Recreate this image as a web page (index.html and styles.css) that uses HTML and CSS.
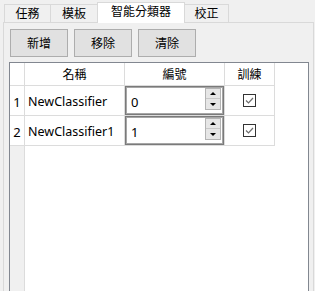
FILE: index.html
```html
<!DOCTYPE html>
<html lang="zh-Hant">
<head>
    <meta charset="UTF-8">
    <title>智能分類器</title>
    <link rel="stylesheet" href="styles.css">
</head>
<body>
    <div class="tabs">
        <div class="tab tab-task">任務</div>
        <div class="tab tab-template">模板</div>
        <div class="tab tab-classifier active">智能分類器</div>
        <div class="tab tab-calibrate">校正</div>
    </div>

    <div class="panel">
        <div class="toolbar">
            <button class="btn">新增</button>
            <button class="btn">移除</button>
            <button class="btn">清除</button>
        </div>

        <div class="grid">
            <div class="cell rowhead"></div>
            <div class="cell head">名稱</div>
            <div class="cell head">編號</div>
            <div class="cell head">訓練</div>
            <div class="cell filler"></div>

            <div class="cell rowhead num">1</div>
            <div class="cell name">NewClassifier</div>
            <div class="cell">
                <div class="spinbox">
                    <span class="value">0</span>
                    <div class="spin">
                        <span class="up"></span>
                        <span class="down"></span>
                    </div>
                </div>
            </div>
            <div class="cell check-cell">
                <span class="checkbox">
                    <svg width="11" height="11" viewBox="0 0 11 11"><polyline points="2,5.5 4.5,8 9,3" fill="none" stroke="#6d6d6d" stroke-width="1.2"/></svg>
                </span>
            </div>
            <div class="cell filler"></div>

            <div class="cell rowhead num">2</div>
            <div class="cell name">NewClassifier1</div>
            <div class="cell">
                <div class="spinbox">
                    <span class="value">1</span>
                    <div class="spin">
                        <span class="up"></span>
                        <span class="down"></span>
                    </div>
                </div>
            </div>
            <div class="cell check-cell">
                <span class="checkbox">
                    <svg width="11" height="11" viewBox="0 0 11 11"><polyline points="2,5.5 4.5,8 9,3" fill="none" stroke="#6d6d6d" stroke-width="1.2"/></svg>
                </span>
            </div>
            <div class="cell filler"></div>

            <div class="cell rowhead empty"></div>
            <div class="cell filler"></div>
            <div class="cell filler"></div>
            <div class="cell filler"></div>
            <div class="cell filler"></div>
        </div>
    </div>
</body>
</html>
```

FILE: styles.css
```css
* {
    margin: 0;
    padding: 0;
    box-sizing: border-box;
}

body {
    width: 315px;
    height: 291px;
    overflow: hidden;
    background: #f0f0f0;
    color: #000;
    font-family: "Noto Sans", "Noto Sans CJK TC", sans-serif;
    font-size: 12px;
}

/* tab strip */
.tabs {
    display: flex;
    align-items: flex-end;
    height: 22px;
    padding-left: 4px;
}

.tab {
    height: 18px;
    margin-left: -1px;
    border: 1px solid #d9d9d9;
    border-bottom: none;
    background: #f0f0f0;
    display: flex;
    align-items: center;
    justify-content: center;
    line-height: 1;
}

.tab:first-child {
    margin-left: 0;
}

.tab-task { width: 47px; }
.tab-template { width: 48px; }
.tab-classifier { width: 88px; }
.tab-calibrate { width: 45px; }

.tab.active {
    position: relative;
    z-index: 1;
    height: 21px;
    margin-bottom: -1px;
    background: #fff;
    padding-bottom: 2px;
}

.panel {
    margin-left: 3px;
    width: 311px;
    height: 269px;
    border: 1px solid #d9d9d9;
    border-bottom: none;
    padding: 6px 0 0 6px;
}

.toolbar {
    display: flex;
    gap: 6px;
}

.btn {
    width: 58px;
    height: 28px;
    background: #e1e1e1;
    border: 1px solid #adadad;
    font-family: inherit;
    font-size: 12px;
    color: #000;
}

/* data grid */
.grid {
    margin: 5px 0 0 -1px;
    width: 300px;
    height: 240px;
    border: 1px solid #828790;
    background: #fff;
    display: grid;
    grid-template-columns: 15px 100px 100px 50px 1fr;
    grid-template-rows: 23px 30px 30px 1fr;
}

.cell {
    border-right: 1px solid #dcdcdc;
    border-bottom: 1px solid #dcdcdc;
    display: flex;
    align-items: center;
}

.head {
    justify-content: center;
    padding-bottom: 1px;
}

.rowhead.num {
    justify-content: center;
    font-size: 13px;
    padding-top: 2px;
}

.rowhead.empty {
    background: #f0f0f0;
    border-bottom: none;
}

.filler {
    border: none;
}

.name {
    padding: 2px 0 0 3px;
    font-size: 12.5px;
}

.spinbox {
    align-self: stretch;
    flex: 1;
    display: flex;
    align-items: flex-start;
    justify-content: space-between;
    border: 1px solid #7a7a7a;
    box-shadow: inset 0 0 0 1px #a6a6a6;
    padding: 1px 2px 0 5px;
    background: #fff;
}

.value {
    margin-top: 5px;
    font-size: 13px;
}

.spin {
    width: 16px;
    display: flex;
    flex-direction: column;
    border: 1px solid #b4b4b4;
}

.spin span {
    height: 10px;
    background: #e6e6e6;
    display: flex;
    align-items: center;
    justify-content: center;
}

.spin .up {
    border-bottom: 1px solid #c8c8c8;
}

.spin .up::before {
    content: "";
    border-left: 3px solid transparent;
    border-right: 3px solid transparent;
    border-bottom: 3px solid #000;
}

.spin .down::before {
    content: "";
    border-left: 3px solid transparent;
    border-right: 3px solid transparent;
    border-top: 3px solid #000;
}

.check-cell {
    justify-content: center;
}

.checkbox {
    width: 13px;
    height: 13px;
    border: 1px solid #333;
    background: #fff;
    display: flex;
    align-items: center;
    justify-content: center;
}
```
